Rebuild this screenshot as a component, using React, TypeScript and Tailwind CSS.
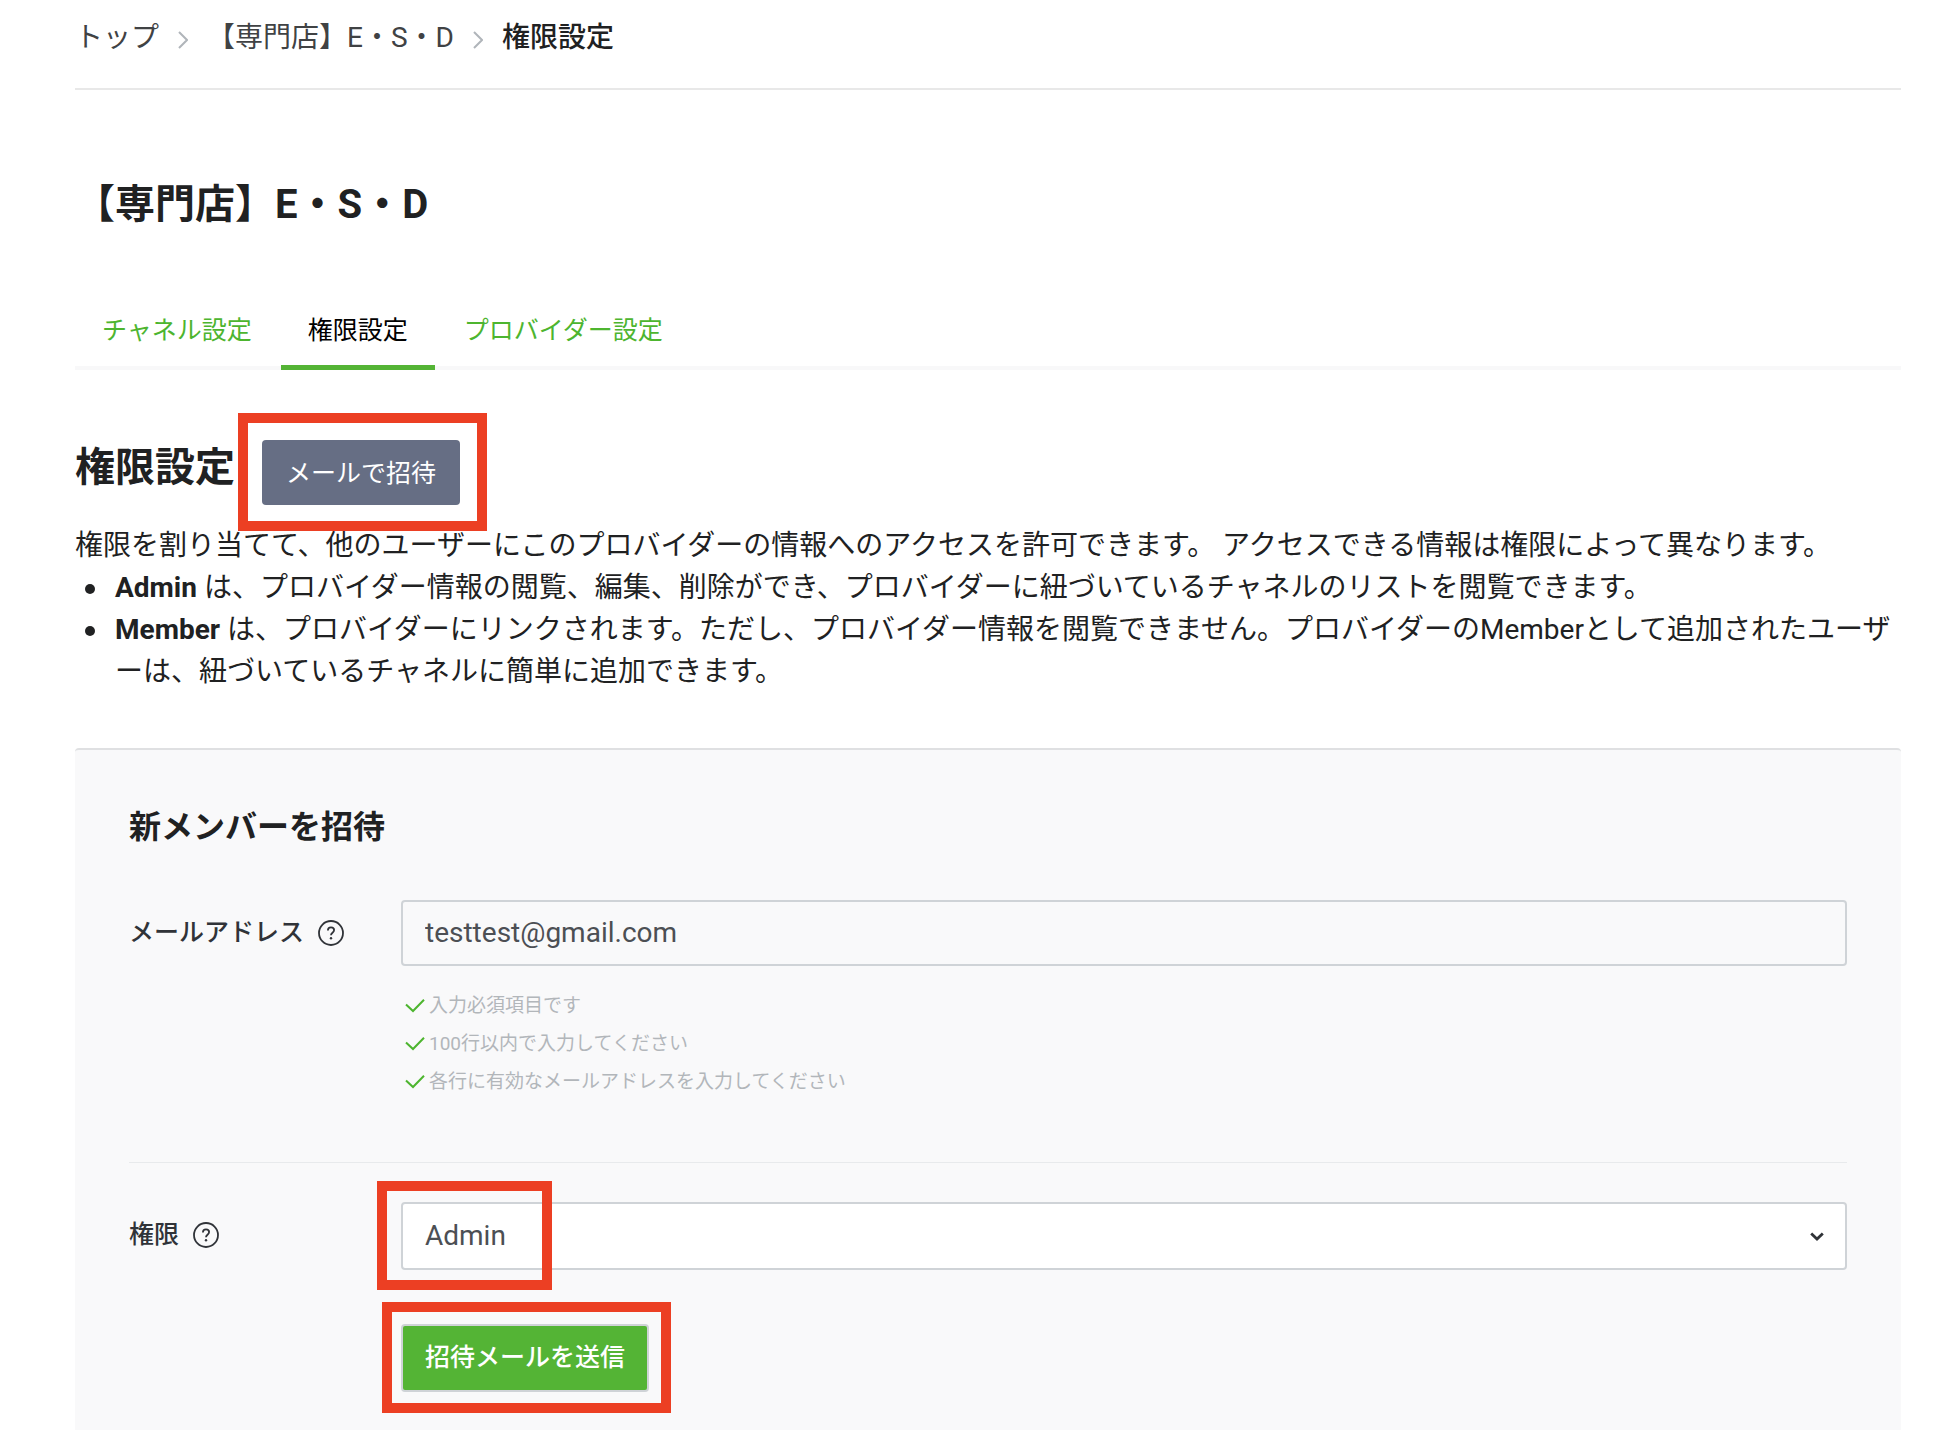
import { useState } from "react";
import type { ReactNode } from "react";

const TABS = ["チャネル設定", "権限設定", "プロバイダー設定"];

const RULES = [
  "入力必須項目です",
  "100行以内で入力してください",
  "各行に有効なメールアドレスを入力してください",
];

function Separator() {
  return (
    <svg width="10" height="18" viewBox="0 0 10 18" fill="none" stroke="#b0b5ba" strokeWidth="2" className="mx-[19px] mt-1 shrink-0">
      <path d="M1 1l8 8-8 8" />
    </svg>
  );
}

function HelpIcon() {
  return (
    <svg width="26" height="26" viewBox="0 0 26 26" fill="none" stroke="#303338" className="shrink-0">
      <circle cx="13" cy="13" r="12" strokeWidth="1.8" />
      <path d="M9.9 10.4c0-1.900 1.300-3.100 3.100-3.100s3.100 1.100 3.100 2.800c0 1.300-.7 2-1.600 2.700-1 .8-1.500 1.200-1.500 2.500" strokeWidth="1.8" />
      <circle cx="13" cy="18.2" r="1.2" fill="#303338" stroke="none" />
    </svg>
  );
}

function CheckIcon() {
  return (
    <svg width="20" height="14" viewBox="0 0 20 14" fill="none" stroke="#4db52f" strokeWidth="2" className="shrink-0">
      <path d="M1 5.500l7 6.500L19 .8" />
    </svg>
  );
}

// red frame drawn over a control
function Highlight({ className }: { className: string }) {
  return <span className={`absolute border-10 border-[#ec3f23] pointer-events-none ${className}`} />;
}

function FieldLabel({ htmlFor, children }: { htmlFor: string; children: ReactNode }) {
  return (
    <div className="w-[272px] h-[66px] shrink-0 flex items-center gap-[14px]">
      <label htmlFor={htmlFor} className="text-[25px] leading-[38px] font-medium text-[#303338]">{children}</label>
      <HelpIcon />
    </div>
  );
}

function Bullet({ children }: { children: ReactNode }) {
  return (
    <li className="flex">
      <span className="w-[10px] h-[10px] ml-[10px] mr-5 mt-[17px] shrink-0 rounded-full bg-[#202122]" />
      <p className="flex-1 min-w-0">{children}</p>
    </li>
  );
}

export default function App() {
  const [tab, setTab] = useState("権限設定");
  const [email, setEmail] = useState("testtest@gmail.com");
  const [role, setRole] = useState("Admin");

  return (
    <div
      lang="ja"
      className="min-h-screen bg-white flex flex-col pl-[75px] pr-[47px] text-[#202122] font-[Roboto,'Noto_Sans_CJK_JP',sans-serif]"
    >
      <nav className="flex items-center pt-[17px] pb-[29px] border-b-2 border-[#e8e8e8] text-[28px] leading-[42px] text-[#404244]">
        <a href="#top">トップ</a>
        <Separator />
        <a href="#channel">【専門店】E・S・D</a>
        <Separator />
        <span className="font-medium text-[#202122]">権限設定</span>
      </nav>

      <h1 className="mt-[85px] text-[40px] leading-[60px] font-bold">【専門店】E・S・D</h1>

      <div className="mt-[77px] flex gap-[2px] text-[25px] leading-[38px] shadow-[inset_0_-4px_0_#f8f8f9]">
        {TABS.map((t) => (
          <button
            key={t}
            type="button"
            onClick={() => setTab(t)}
            className={
              t === tab
                ? "px-[27px] pb-[15px] border-b-5 border-[#54b435] text-black"
                : "px-[27px] pb-[15px] border-b-5 border-transparent text-[#4db52f]"
            }
          >
            {t}
          </button>
        ))}
      </div>

      <div className="mt-[70px] flex items-start gap-[27px]">
        <h2 className="text-[40px] leading-[56px] font-bold">権限設定</h2>
        <div className="relative">
          <button type="button" className="block h-[65px] px-6 pt-[2px] rounded bg-[#666e84] text-white text-[25px] leading-[38px]">
            メールで招待
          </button>
          <Highlight className="-left-6 -right-[27px] -top-[27px] -bottom-[26px]" />
        </div>
      </div>

      <div className="mt-5 text-[28px] leading-[42px]">
        <p>権限を割り当てて、他のユーザーにこのプロバイダーの情報へのアクセスを許可できます。 アクセスできる情報は権限によって異なります。</p>
        <ul>
          <Bullet>
            <b>Admin</b> は、プロバイダー情報の閲覧、編集、削除ができ、プロバイダーに紐づいているチャネルのリストを閲覧できます。
          </Bullet>
          <Bullet>
            <b>Member</b> は、プロバイダーにリンクされます。ただし、プロバイダー情報を閲覧できません。プロバイダーのMemberとして追加されたユーザーは、紐づいているチャネルに簡単に追加できます。
          </Bullet>
        </ul>
      </div>

      <form
        onSubmit={(e) => e.preventDefault()}
        className="mt-[55px] flex-1 border-t-2 border-[#dfe0e2] rounded-t-sm bg-[#f9f9fa] px-[54px] pt-[53px] pb-9"
      >
        <h3 className="text-[32px] leading-[48px] font-bold">新メンバーを招待</h3>

        <div className="mt-[49px] flex">
          <FieldLabel htmlFor="email">メールアドレス</FieldLabel>
          <div className="flex-1 min-w-0">
            <input
              id="email"
              type="email"
              value={email}
              onChange={(e) => setEmail(e.target.value)}
              className="block w-full h-[66px] px-[22px] pb-[2px] border-2 border-[#cfd3d7] rounded bg-transparent text-[28px] text-[#4c4f54]"
            />
            <ul className="mt-[21px] text-[19px] leading-[38px] text-[#b2b6ba]">
              {RULES.map((r) => (
                <li key={r} className="flex items-center gap-1 pl-1">
                  <CheckIcon />
                  {r}
                </li>
              ))}
            </ul>
          </div>
        </div>

        <hr className="mt-[61px] border-t border-[#e8eaec]" />

        <div className="mt-[39px] flex">
          <FieldLabel htmlFor="role">権限</FieldLabel>
          <div className="flex-1 min-w-0">
            <div className="relative">
              <select
                id="role"
                value={role}
                onChange={(e) => setRole(e.target.value)}
                className="block appearance-none w-full h-[68px] px-[22px] border-2 border-[#cfd3d7] rounded bg-white text-[28px] text-[#4c4f54]"
              >
                <option>Admin</option>
                <option>Member</option>
              </select>
              <svg
                width="14"
                height="10"
                viewBox="0 0 14 10"
                fill="none"
                stroke="#303338"
                strokeWidth="2.8"
                className="absolute right-[23px] top-[30px] pointer-events-none"
              >
                <path d="M1.2 1.5L7 7l5.800-5.500" />
              </svg>
              <Highlight className="-left-6 -top-[21px] w-[175px] h-[109px]" />
            </div>
            <div className="relative w-fit mt-[54px]">
              <button
                type="submit"
                className="block h-[68px] px-[22px] border-2 border-[#cfd3d7] rounded bg-[#54b435] text-white text-[25px] leading-[38px] font-medium"
              >
                招待メールを送信
              </button>
              <Highlight className="-left-[19px] -right-[22px] -top-[22px] -bottom-[21px]" />
            </div>
          </div>
        </div>
      </form>
    </div>
  );
}
